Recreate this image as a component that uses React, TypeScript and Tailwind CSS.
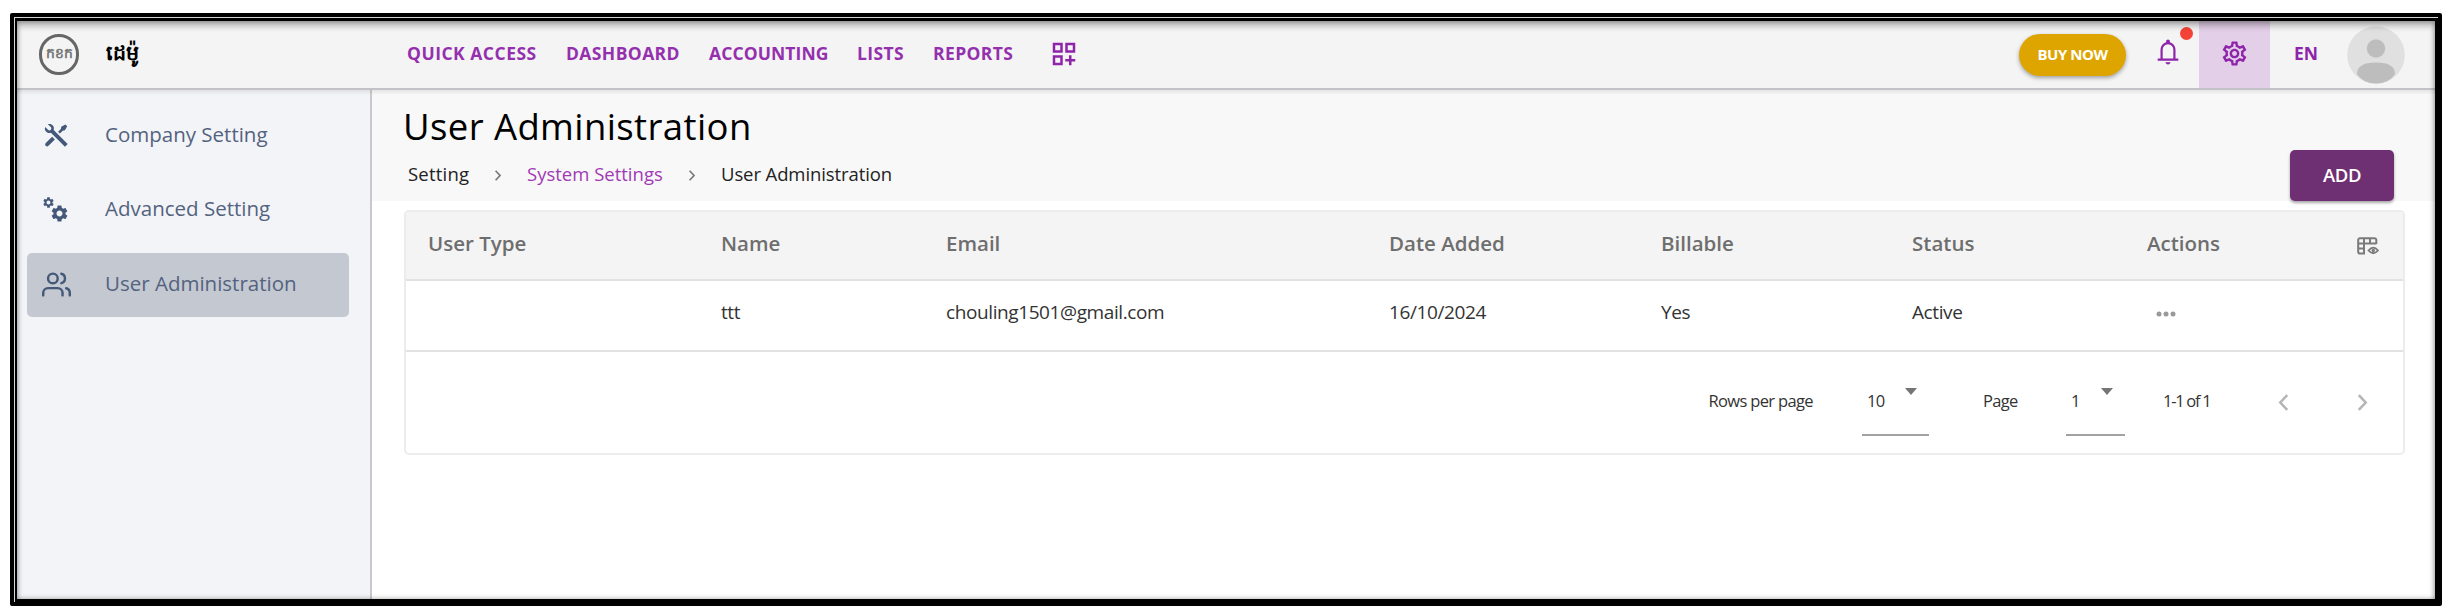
import type { ReactNode } from 'react';
import { FiUsers } from 'react-icons/fi';
import { MdOutlineDashboardCustomize, MdOutlineSettings, MdSettings } from 'react-icons/md';
import { RiToolsFill } from 'react-icons/ri';

const NAV = [
  { label: 'QUICK ACCESS', cls: 'w-[130px] tracking-[0.5px]' },
  { label: 'DASHBOARD', cls: 'w-[114px] tracking-[0.4px]' },
  { label: 'ACCOUNTING', cls: 'w-[119px] tracking-[0.1px]' },
  { label: 'LISTS', cls: 'w-[47px] tracking-[0.4px]' },
  { label: 'REPORTS', cls: 'w-[81px] tracking-[0.4px]' },
];

const COLUMNS = [
  { title: 'User Type', value: '', cls: 'w-[293px]' },
  { title: 'Name', value: 'ttt', cls: 'w-[225px]' },
  { title: 'Email', value: 'chouling1501@gmail.com', cls: 'w-[443px]' },
  { title: 'Date Added', value: '16/10/2024', cls: 'w-[272px]' },
  { title: 'Billable', value: 'Yes', cls: 'w-[251px]' },
  { title: 'Status', value: 'Active', cls: 'w-[235px]' },
];

function BellIcon() {
  return (
    <svg viewBox="0 -960 960 960" className="h-[30px] w-[30px]" fill="currentColor">
      <path d="M150-200v-70h90v-290q0-83 50-147.5T420-792v-28q0-25 17.5-42.5T480-880t42.5 17.5T540-820v28q80 20 130 84.5T720-560v290h90v70H150Zm330 120q-33 0-56.5-23.5T400-150h160q0 23-23.5 46.5T480-80ZM310-270h340v-290q0-70-50-120t-120-50q-70 0-120 50t-50 120v290Z" />
    </svg>
  );
}

function GearsIcon() {
  return (
    <svg viewBox="0 0 26 26" className="h-[26px] w-[26px]">
      <MdSettings x={-1} y={-1} size={13} />
      <MdSettings x={6.5} y={6.5} size={20} />
    </svg>
  );
}

function ColumnsIcon() {
  return (
    <svg viewBox="0 0 24 20" className="h-5 w-6" fill="none" stroke="#7a7a7a" strokeWidth="2">
      <path d="M9 17.5H4A1.8 1.8 0 0 1 2.200 15.700V4A1.800 1.800 0 0 1 4 2.200H18.500A1.800 1.800 0 0 1 20.300 4V8" />
      <path d="M2.200 7.600H20.300M2.200 12.400H8M8 2.200V17.500M14 2.200V7.600" />
      <path d="M12.500 14.500Q17.300 8.800 22 14.500Q17.300 20 12.500 14.500Z" strokeWidth="1.800" />
      <circle cx="17.300" cy="14.400" r="1" strokeWidth="1.500" />
    </svg>
  );
}

function Avatar() {
  return (
    <svg viewBox="0 0 58 58" className="h-[58px] w-[58px]">
      <circle cx="29" cy="29" r="28.800" fill="#e0e0e0" />
      <circle cx="29" cy="22.500" r="9.200" fill="#bdbdbd" />
      <path d="M10 48Q10 36.500 29 36.500T48 48Q42 57.500 29 57.500T10 48Z" fill="#bdbdbd" />
    </svg>
  );
}

function Chevron({ left, className }: { left?: boolean; className: string }) {
  return (
    <svg viewBox="0 0 10 16" className={className} fill="none" stroke="currentColor" strokeWidth="2.4">
      <path d={left ? 'M8.500 1L2 8l6.500 7' : 'M1.500 1L8 8l-6.500 7'} />
    </svg>
  );
}

function SideItem({ icon, active, label, cls }: { icon: ReactNode; active?: boolean; label: string; cls: string }) {
  return (
    <div className={`ml-[10px] flex h-16 w-[322px] items-center rounded-[5px] text-[#44587a] ${active ? 'bg-[#c4c8d1]' : ''}`}>
      <div className="ml-[12px] flex w-[34px] justify-center">{icon}</div>
      <span className={`mb-[3px] ml-[32px] text-[20.5px] font-[450] text-[#53637f] ${cls}`}>{label}</span>
    </div>
  );
}

function Select({ value, cls, textCls }: { value: string; cls: string; textCls: string }) {
  return (
    <div className={`flex h-[60px] justify-between border-b-2 border-[#a2a2a2] ${cls}`}>
      <span className={`mt-[13px] leading-6 ${textCls}`}>{value}</span>
      <svg viewBox="0 0 12 7" className="mt-[12px] mr-[12px] h-[7px] w-3">
        <path d="M0 0H12L6 7Z" fill="#757575" />
      </svg>
    </div>
  );
}

export default function App() {
  return (
    <div className="h-[614px] w-[2448px] overflow-hidden bg-white pt-[13px] pl-[10px] font-['Open_Sans','Noto_Sans',sans-serif] whitespace-nowrap">
      <div className="h-[593px] w-[2432px] rounded-[2px] border-4 border-black">
        <div className="h-full bg-black">
          <div className="h-full border-t border-l border-[#d5d5d5]">
            <div className="relative flex h-full flex-col border-t-[3px] border-r-[3px] border-b-[3px] border-l-2 border-black bg-white">
              <header className="flex h-[69px] shrink-0 items-start border-b-2 border-[#c3c2c9] bg-[#f4f4f4]">
                <div className="mt-[13px] ml-[22px] flex h-[41px] w-10 items-center justify-center rounded-full border-[3px] border-[#666]">
                  <span className="mb-[3px] text-[14px] leading-none font-bold text-[#777]">កខក</span>
                </div>
                <span className="mt-[15px] ml-[27px] w-[301px] text-[20.500px] leading-[32px] font-bold text-black">ដេម៉ូ</span>
                <nav className="mt-[20px] flex gap-[29px] text-[17.500px] leading-6 font-bold text-[#9430ae]">
                  {NAV.map((n) => (
                    <span key={n.label} className={n.cls}>{n.label}</span>
                  ))}
                </nav>
                <MdOutlineDashboardCustomize className="mt-[18px] ml-[35px] text-[#8e24aa]" size={30} />
                <div className="ml-auto flex h-full items-start text-[#8e24aa]">
                  <div className="mt-[13px] flex h-[42px] w-[107px] items-center justify-center rounded-full bg-[#dea500] pb-[2px] text-[15px] font-bold tracking-[-0.45px] text-white shadow-[0_2px_4px_rgba(0,0,0,0.35)]">
                    BUY NOW
                  </div>
                  <div className="relative mt-[16px] ml-[27px]">
                    <BellIcon />
                    <span className="absolute top-[-10px] left-[27px] h-[13px] w-[13px] rounded-full bg-[#f44336]" />
                  </div>
                  <div className="ml-[16px] flex h-[67px] w-[71px] items-start justify-center bg-[#e3cfe8] pt-[18px]">
                    <MdOutlineSettings size={29} />
                  </div>
                  <span className="mt-[20px] ml-[24px] w-[53px] text-[17.500px] leading-6 font-bold">EN</span>
                  <div className="mt-[5px] mr-[30px]">
                    <Avatar />
                  </div>
                </div>
              </header>

              <div className="flex min-h-0 flex-1">
                <aside className="flex w-[355px] flex-col gap-[10.500px] border-r-2 border-[#c9c9cc] bg-[#f3f4f7] pt-[13.500px]">
                  <SideItem icon={<RiToolsFill size={31} />} label="Company Setting" cls="" />
                  <SideItem icon={<GearsIcon />} label="Advanced Setting" cls="" />
                  <SideItem active icon={<FiUsers size={29} />} label="User Administration" cls="" />
                </aside>

                <main className="min-w-0 flex-1">
                  <div className="flex h-[111px] justify-between bg-[#f8f8f8] pr-[41px] pl-[32px]">
                    <div>
                      <h1 className="mt-[10px] ml-[-1px] text-[36.500px] leading-[52px] font-[450] tracking-[0.400px] text-black">User Administration</h1>
                      <div className="mt-[8px] ml-[4px] flex items-center text-[18.500px] leading-7 font-[450] text-[#222]">
                        <span className="w-[86px] tracking-[0.2px]">Setting</span>
                        <Chevron className="mt-[3px] h-[11px] w-[8px] text-[#777]" />
                        <span className="ml-[25px] w-[161px] text-[#a13ab5]">System Settings</span>
                        <Chevron className="mt-[3px] h-[11px] w-[8px] text-[#777]" />
                        <span className="ml-[25px] tracking-[-0.100px]">User Administration</span>
                      </div>
                    </div>
                    <button className="mt-[60px] flex h-[51px] w-[104px] items-center justify-center rounded-[5px] bg-[#6f2f73] pb-[2px] text-[18.500px] font-semibold tracking-[-0.4px] text-white shadow-[0_2px_3px_rgba(0,0,0,0.35)]">
                      ADD
                    </button>
                  </div>

                  <section className="mt-[9px] ml-[32px] h-[245px] w-[2001px] overflow-hidden rounded-[5px] border-2 border-[#ececec] bg-white">
                    <div className="flex h-[69px] items-center border-b-2 border-[#e2e2e2] bg-[#f4f4f4] pl-[22px] text-[20.500px] font-semibold text-[#6e6e6e]">
                      {COLUMNS.map((c) => (
                        <span key={c.title} className={`mb-[5px] ${c.cls}`}>{c.title}</span>
                      ))}
                      <span className="mb-[5px] w-[209px]">Actions</span>
                      <ColumnsIcon />
                    </div>
                    <div className="flex h-[71px] items-center border-b-2 border-[#e2e2e2] pl-[22px] text-[19px] font-[450] text-[#333]">
                      {COLUMNS.map((c) => (
                        <span key={c.title} className={`mb-[7px] tracking-[-0.400px] ${c.cls}`}>{c.value}</span>
                      ))}
                      <svg viewBox="0 0 22 8" className="mb-[4px] ml-[8px] h-2 w-[22px]" fill="#999">
                        <circle cx="4" cy="4" r="2.500" />
                        <circle cx="11" cy="4" r="2.500" />
                        <circle cx="18" cy="4" r="2.500" />
                      </svg>
                    </div>
                    <div className="flex justify-end pt-[24px] pr-[35px] text-[16.500px] font-[450] tracking-[-0.650px] text-[#333]">
                      <span className="mt-[13px] mr-[49px] leading-6">Rows per page</span>
                      <Select value="10" cls="w-[67px]" textCls="ml-[5px]" />
                      <span className="mt-[13px] ml-[54px] w-[83px] leading-6">Page</span>
                      <Select value="1" cls="w-[59px]" textCls="ml-[5px]" />
                      <span className="mt-[13px] ml-[38px] w-[115px] leading-6 tracking-[-1.300px]">1-1 of 1</span>
                      <Chevron left className="mt-[18px] h-[17px] w-[11px] text-[#b5b5b5]" />
                      <Chevron className="mt-[18px] ml-[68px] h-[17px] w-[11px] text-[#b5b5b5]" />
                    </div>
                  </section>
                </main>
              </div>
              <div className="pointer-events-none absolute inset-0 shadow-[inset_0_5px_6px_rgba(0,0,0,0.25),inset_0_0_5px_rgba(0,0,0,0.35)]" />
              <div className="pointer-events-none absolute top-[69px] left-0 h-[5px] w-full bg-gradient-to-b from-black/8 to-transparent" />
            </div>
          </div>
        </div>
      </div>
    </div>
  );
}
